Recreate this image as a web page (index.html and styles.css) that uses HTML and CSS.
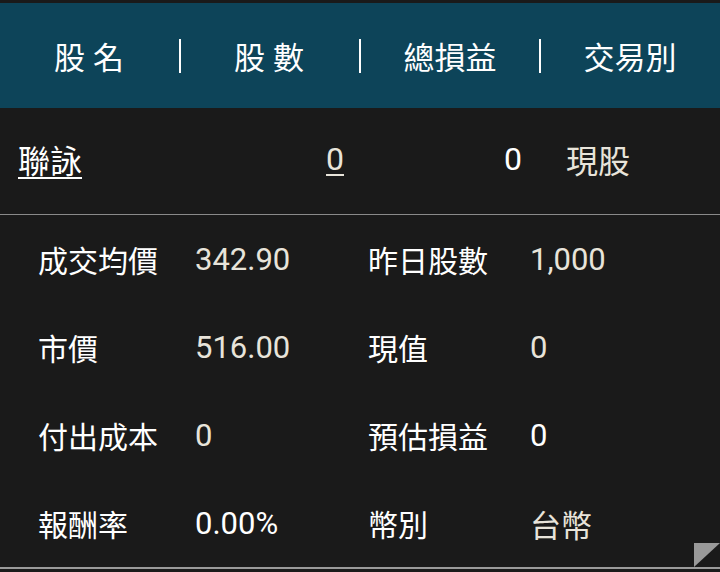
FILE: index.html
```html
<!DOCTYPE html>
<html lang="zh-Hant">
<head>
    <meta charset="UTF-8">
    <meta name="viewport" content="width=device-width, initial-scale=1.0">
    <title>庫存明細</title>
    <link rel="stylesheet" href="styles.css">
</head>
<body>
    <div class="header">
        <div class="head-cell spaced">股名</div>
        <div class="head-cell spaced">股數</div>
        <div class="head-cell">總損益</div>
        <div class="head-cell">交易別</div>
    </div>

    <div class="stock-row">
        <a class="stock-name" href="#">聯詠</a>
        <a class="stock-qty" href="#">0</a>
        <span class="stock-pnl">0</span>
        <span class="stock-type">現股</span>
    </div>

    <div class="detail">
        <div class="detail-row">
            <span class="label">成交均價</span>
            <span class="value">342.90</span>
            <span class="label">昨日股數</span>
            <span class="value">1,000</span>
        </div>
        <div class="detail-row">
            <span class="label">市價</span>
            <span class="value">516.00</span>
            <span class="label">現值</span>
            <span class="value">0</span>
        </div>
        <div class="detail-row">
            <span class="label">付出成本</span>
            <span class="value">0</span>
            <span class="label">預估損益</span>
            <span class="value white">0</span>
        </div>
        <div class="detail-row">
            <span class="label">報酬率</span>
            <span class="value white">0.00%</span>
            <span class="label">幣別</span>
            <span class="value">台幣</span>
        </div>
        <span class="corner"></span>
    </div>
</body>
</html>
```

FILE: styles.css
```css
body {
    margin: 0;
    background-color: #1a1a1a;
    color: #ffffff;
    font-family: Roboto, "Noto Sans CJK TC", sans-serif;
    font-size: 30px;
}
.header {
    margin-top: 3px;
    height: 105px;
    background-color: #0d4459;
    display: flex;
}
.head-cell {
    flex: 1;
    display: flex;
    align-items: center;
    justify-content: center;
    position: relative;
    font-size: 31px;
}
.head-cell + .head-cell::before {
    content: "";
    position: absolute;
    left: -1px;
    top: 36px;
    width: 2px;
    height: 34px;
    background-color: #ffffff;
}
.spaced {
    letter-spacing: 8px;
    text-indent: 6px;
}
.stock-row {
    box-sizing: border-box;
    height: 107px;
    padding-bottom: 4px;
    border-bottom: 1px solid #8a8a8a;
    display: grid;
    grid-template-columns: 232px 94px 178px 1fr;
    align-items: center;
    padding-left: 18px;
    font-size: 32px;
}
.stock-name,
.stock-qty {
    text-decoration: underline;
    text-decoration-thickness: 2px;
    text-underline-offset: 4px;
}
.stock-name {
    color: #ffffff;
}
.stock-qty {
    color: #e8e4da;
    justify-self: end;
}
.stock-pnl {
    justify-self: end;
}
.stock-type {
    padding-left: 44px;
    color: #e8e4da;
}
.detail {
    position: relative;
    border-bottom: 2px solid #9a9a9a;
}
.detail-row {
    height: 88px;
    display: grid;
    grid-template-columns: 157px 173px 162px 1fr;
    align-items: center;
    padding-left: 38px;
}
.value {
    color: #e8e4da;
    font-size: 31px;
}
.value.white {
    color: #ffffff;
}
.corner {
    position: absolute;
    right: 0;
    bottom: 0;
    width: 26px;
    height: 24px;
    background-color: #999999;
    clip-path: polygon(0 0, 100% 0, 0 100%);
}
```
